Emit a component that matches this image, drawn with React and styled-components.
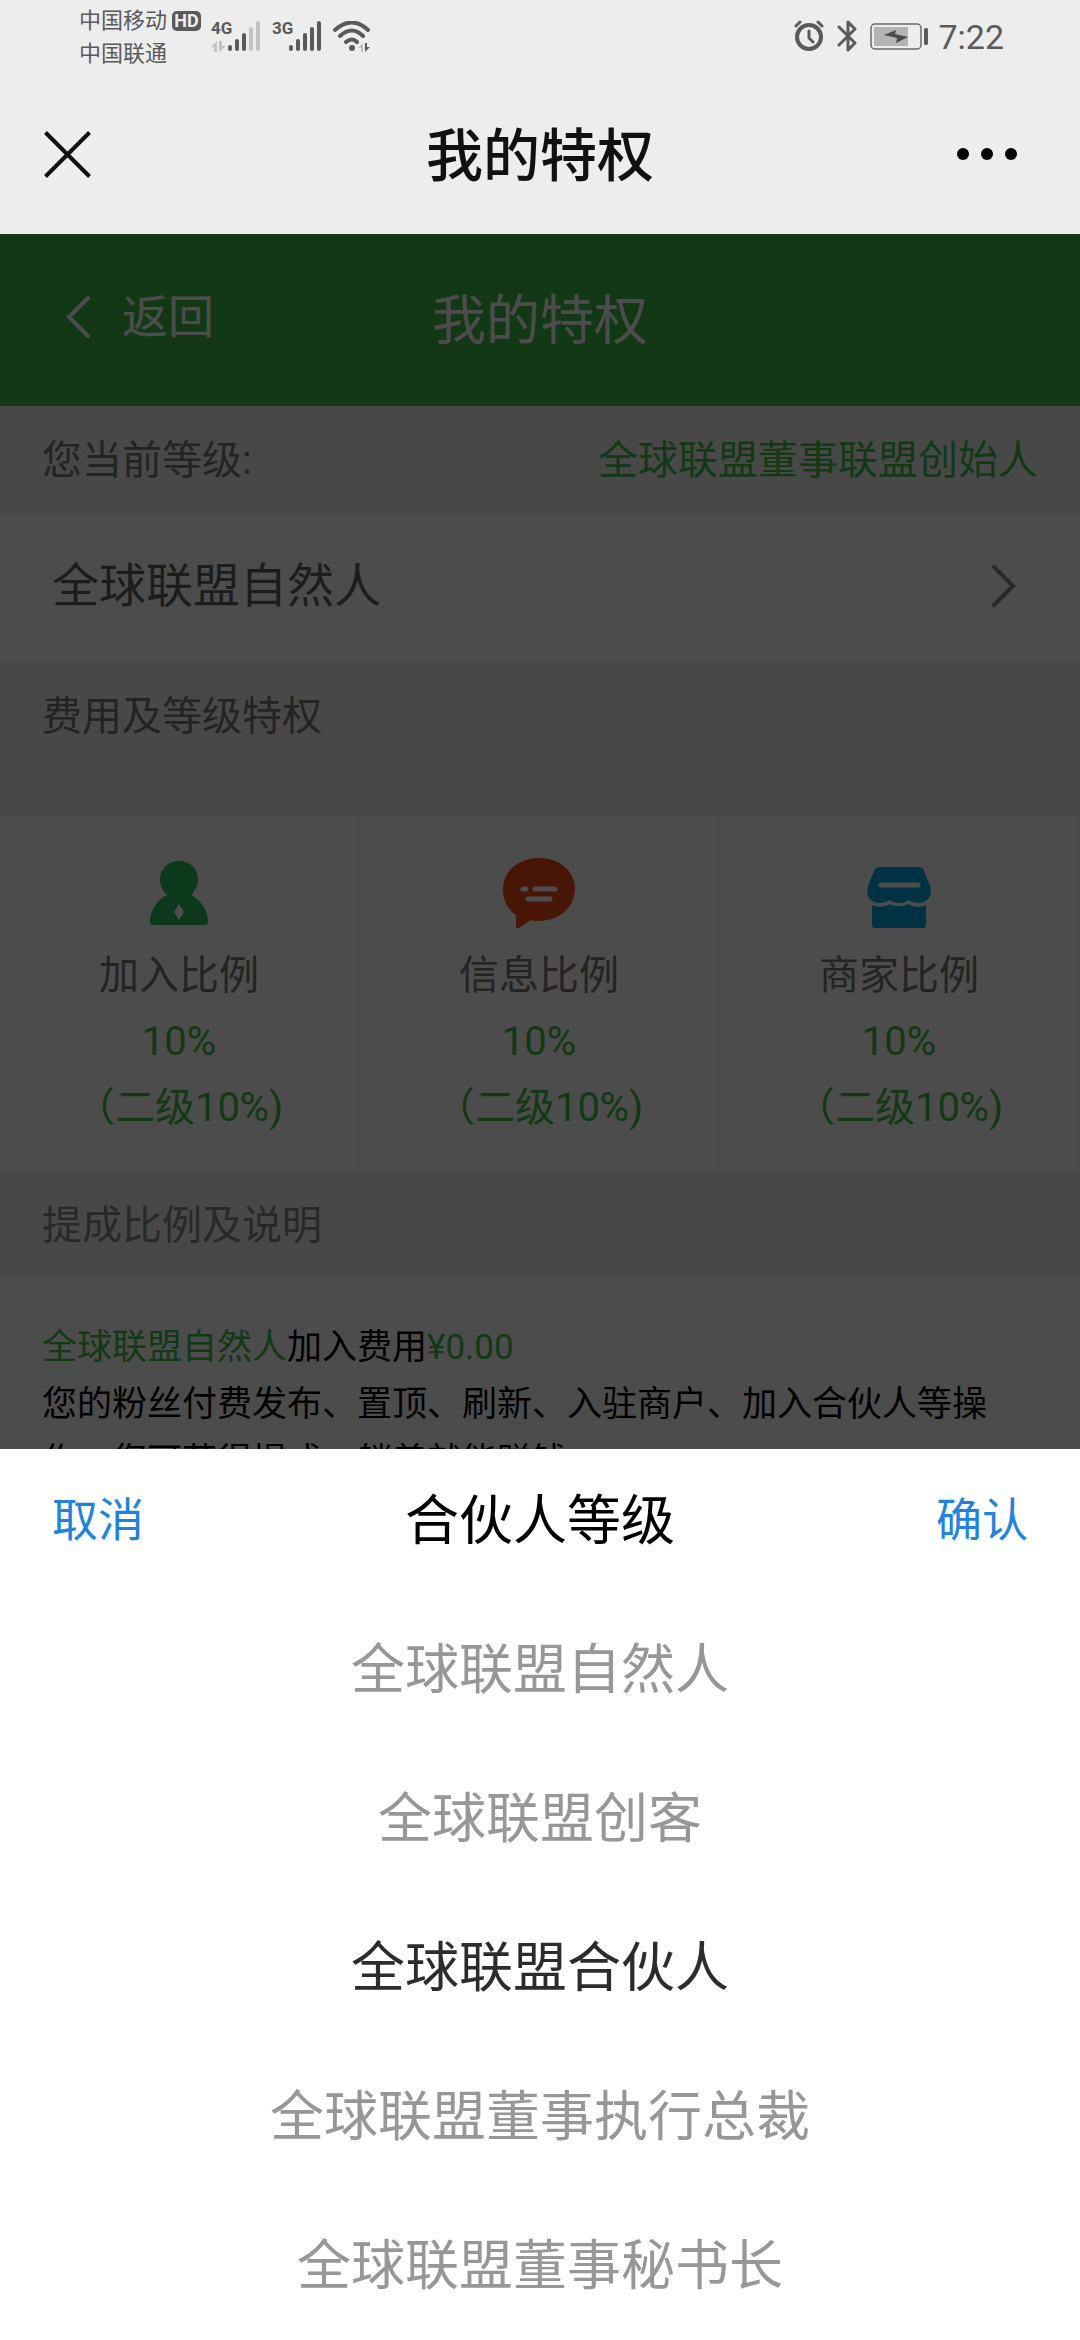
import React, { useState } from "react";
import styled, { createGlobalStyle } from "styled-components";

const GlobalStyle = createGlobalStyle`
  *, *::before, *::after { box-sizing: border-box; }
  html, body { margin: 0; padding: 0; }
  body {
    font-family: Roboto, "Noto Sans CJK SC", sans-serif;
    color: #000;
    background: #fff;
  }
  h1, h2, h3, p, ul { margin: 0; padding: 0; font-weight: 400; }
  ul { list-style: none; }
  button {
    margin: 0;
    padding: 0;
    border: 0;
    background: none;
    color: inherit;
    font: inherit;
    cursor: pointer;
  }
  svg { display: block; flex: none; }
`;

const green = "#3fbb4a";

const Screen = styled.div`
  display: flex;
  flex-direction: column;
  height: 100vh;
  overflow: hidden;
`;

const StatusBar = styled.header`
  display: flex;
  justify-content: space-between;
  height: 74px;
  padding: 0 76px 0 79px;
  background: #ededed;
  color: #5a5a5a;
`;

const StatusGroup = styled.div`
  display: flex;
  align-items: flex-start;
  gap: ${(p) => p.$gap || 0}px;
  padding-top: ${(p) => p.$top || 0}px;
`;

const Carriers = styled.div`
  display: flex;
  flex-direction: column;
  font-size: 22px;
  line-height: 33px;
`;

const CarrierLine = styled.span`
  display: flex;
  align-items: center;
  gap: 5px;
`;

const HdBadge = styled.span`
  display: grid;
  place-items: center;
  width: 29px;
  height: 20px;
  border-radius: 5px;
  background: #5a5a5a;
  color: #ededed;
  font-size: 18px;
  font-weight: 700;
  line-height: 20px;
`;

const Signal = styled.div`
  display: flex;
  align-items: flex-start;
`;

const SignalSide = styled.div`
  display: flex;
  flex-direction: column;
  gap: 6px;
  width: 17px;
  font-size: 17px;
  font-weight: 700;
  line-height: 14px;
`;

const Clock = styled.time`
  font-size: 34px;
  line-height: 34px;
`;

const NavBar = styled.div`
  display: grid;
  grid-template-columns: 1fr auto 1fr;
  align-items: center;
  height: 160px;
  padding: 0 44px;
  background: #ededed;
  color: #111;
`;

const NavTitle = styled.h1`
  padding-top: 6px;
  font-size: 57px;
  font-weight: 500;
  line-height: 80px;
`;

const NavButton = styled.button`
  justify-self: ${(p) => (p.$end ? "end" : "start")};
  padding-right: ${(p) => (p.$end ? 18 : 0)}px;
`;

const Stage = styled.main`
  position: relative;
  flex: 1;
  min-height: 0;
  overflow: hidden;
  background: #fff;
`;

const PageBar = styled.div`
  display: grid;
  grid-template-columns: 1fr auto 1fr;
  align-items: center;
  height: 172px;
  padding: 0 64px;
  background: ${green};
  color: #fff;
`;

const BackButton = styled.button`
  display: flex;
  align-items: center;
  gap: 30px;
  padding-bottom: 6px;
  font-size: 46px;
  line-height: 64px;
`;

const PageTitle = styled.h2`
  padding-top: 4px;
  font-size: 54px;
  line-height: 80px;
`;

const Strip = styled.div`
  display: flex;
  justify-content: space-between;
  height: ${(p) => p.$height}px;
  padding: 25px 42px 0;
  background: #f2f2f2;
  color: ${(p) => p.$color || "#777"};
  font-size: 40px;
  line-height: 60px;
`;

const Accent = styled.span`
  color: ${green};
`;

const LevelButton = styled.button`
  display: flex;
  align-items: center;
  justify-content: space-between;
  width: 100%;
  height: 148px;
  padding: 0 62px 4px 52px;
  background: #fff;
  color: #5f5f5f;
  font-size: 47px;
  line-height: 68px;
`;

const Cells = styled.div`
  display: grid;
  grid-template-columns: repeat(3, 1fr);
  background: #fff;
`;

const Cell = styled.section`
  display: flex;
  flex-direction: column;
  align-items: center;
  height: 356px;
  padding-top: 35px;
  border-right: 2px solid #f4f4f4;
  color: #777;
  font-size: 40px;
  line-height: 66px;
  white-space: nowrap;

  svg { margin-bottom: 15px; }
`;

const Notes = styled.div`
  padding: 42px 42px;
  background: #fff;
  font-size: 35px;
  line-height: 57px;
`;

const Mask = styled.div`
  position: absolute;
  inset: 0;
  background: rgba(0, 0, 0, 0.7);
`;

const Sheet = styled.section`
  position: absolute;
  left: 0;
  right: 0;
  bottom: 0;
  background: #fff;
`;

const SheetBar = styled.div`
  display: grid;
  grid-template-columns: 1fr auto 1fr;
  align-items: center;
  height: 146px;
  padding: 0 52px 4px;
`;

const SheetTitle = styled.h3`
  padding-top: 4px;
  font-size: 54px;
  line-height: 80px;
`;

const SheetAction = styled.button`
  justify-self: ${(p) => (p.$end ? "end" : "start")};
  color: #1f84dc;
  font-size: 46px;
  line-height: 68px;
`;

const Option = styled.button`
  display: block;
  width: 100%;
  height: 149px;
  padding-top: 2px;
  color: ${(p) => (p.$active ? "#2c2c2c" : "#979797")};
  font-size: 54px;
  line-height: 80px;
  text-align: center;
`;

const barTops = [24, 18, 12, 6, 0];

function Bars({ lit }) {
  return (
    <svg width="33" height="31" viewBox="0 0 33 31">
      {barTops.map((top, i) => (
        <rect key={top} x={i * 7} y={top} width="4" height={30 - top} rx="2"
          fill={i < lit ? "#5a5a5a" : "#c2c2c2"} />
      ))}
    </svg>
  );
}

function DataArrows() {
  return (
    <svg width="15" height="11" viewBox="0 0 15 11" fill="#c2c2c2">
      <path d="M0 6 6 0v11H3V6zM8 0h3v5h4l-7 6z" />
    </svg>
  );
}

function WifiIcon() {
  return (
    <svg width="38" height="31" viewBox="0 0 38 31" fill="none" stroke="#5a5a5a" strokeWidth="4" strokeLinecap="round">
      <path d="M2 9Q19-6 35 9M7 15Q19 4 30 15M13 21Q19 16 24 21" />
      <circle cx="19" cy="27" r="3" fill="#5a5a5a" stroke="none" />
      <path d="M25 27l5-5v9h-2v-4z" fill="#c2c2c2" stroke="none" />
      <path d="M32 22v9l5-5h-3v-4z" fill="#5a5a5a" stroke="none" />
    </svg>
  );
}

function AlarmIcon() {
  return (
    <svg width="30" height="32" viewBox="0 0 30 32" fill="none" stroke="#5a5a5a" strokeWidth="4" strokeLinecap="round">
      <circle cx="15" cy="17" r="12" />
      <path strokeWidth="3" d="M15 11v7l4 4" />
      <path strokeWidth="3" d="M2 6 6 2M28 6 24 2" />
    </svg>
  );
}

function BluetoothIcon() {
  return (
    <svg width="20" height="32" viewBox="0 0 20 32" fill="none" stroke="#5a5a5a" strokeWidth="3" strokeLinecap="round" strokeLinejoin="round">
      <path d="M2 7 18 23 11 30V2l7 7L2 25" />
    </svg>
  );
}

function BatteryIcon() {
  return (
    <svg width="58" height="32" viewBox="0 0 58 32">
      <rect x="1" y="4" width="50" height="25" rx="4" fill="none" stroke="#6a6a6a" strokeWidth="1.5" />
      <rect x="4" y="7" width="34" height="19" fill="#b4b4b4" />
      <path d="M14 15 26 10l-1 4 13 3-12 6 1-5z" fill="#4a4a4a" />
      <rect x="54" y="8" width="4" height="17" rx="1.5" fill="#5a5a5a" />
    </svg>
  );
}

function CloseIcon() {
  return (
    <svg width="47" height="47" viewBox="0 0 47 47" stroke="#111" strokeWidth="4">
      <path d="M1.5 1.5l44 44M45.5 1.5l-44 44" />
    </svg>
  );
}

function MoreIcon() {
  return (
    <svg width="62" height="14" viewBox="0 0 62 14">
      <circle cx="7" cy="7" r="6" />
      <circle cx="31" cy="7" r="6" />
      <circle cx="55" cy="7" r="6" />
    </svg>
  );
}

function Chevron({ left, color }) {
  return (
    <svg width="28" height="44" viewBox="0 0 28 44" fill="none" stroke={color} strokeWidth="4" strokeLinecap="round">
      <path d={left ? "M24 3 5 22l19 19" : "M4 3l19 19L4 41"} />
    </svg>
  );
}

function PersonIcon() {
  return (
    <svg width="78" height="78" viewBox="0 0 78 78">
      <path fill="#28bc5a" d="M39 11c11 0 19 8 19 18 0 7-3 12-7 16 10 5 17 15 17 27 0 2-1 3-3 3H13c-2 0-3-1-3-3 0-12 7-22 17-27-4-4-7-9-7-16 0-10 8-18 19-18z" />
      <path fill="#fff" d="M39 54l5 8-5 8-5-8z" />
    </svg>
  );
}

function MessageIcon() {
  return (
    <svg width="78" height="78" viewBox="0 0 78 78">
      <path fill="#f04a18" d="M39 8c20 0 36 13 36 31S59 71 39 71c-3 0-6 0-8-1l-12 8c-2 1-3 0-3-2V65C8 60 3 51 3 39 3 21 19 8 39 8z" />
      <path stroke="#fff" strokeWidth="5" strokeLinecap="round" d="M23 39h3M35 39h20M28 49h22" />
    </svg>
  );
}

function ShopIcon() {
  return (
    <svg width="78" height="78" viewBox="0 0 78 78">
      <path fill="#00a8e4" d="M20 17h38c3 0 5 1 6 4l6 15c3 9-2 17-12 17-4 0-7-2-10-3-3 4-14 4-18 0-3 1-6 3-10 3-10 0-15-8-12-17l6-15c1-3 3-4 6-4z" />
      <path fill="#00a8e4" d="M12 55c7 3 13 2 18-1 5 3 13 3 18 0 5 3 12 4 18 1v19c0 3-2 5-5 5H17c-3 0-5-2-5-5z" />
      <path stroke="#fff" strokeWidth="5" strokeLinecap="round" d="M21 35h37" />
    </svg>
  );
}

const ratios = [
  { name: "加入比例", Icon: PersonIcon },
  { name: "信息比例", Icon: MessageIcon },
  { name: "商家比例", Icon: ShopIcon },
];

const levels = [
  "全球联盟自然人",
  "全球联盟创客",
  "全球联盟合伙人",
  "全球联盟董事执行总裁",
  "全球联盟董事秘书长",
];

export default function App() {
  const [selected, setSelected] = useState(2);

  return (
    <Screen>
      <GlobalStyle />
      <StatusBar>
        <StatusGroup $gap={10} $top={4}>
          <Carriers>
            <CarrierLine>中国移动 <HdBadge>HD</HdBadge></CarrierLine>
            <CarrierLine>中国联通</CarrierLine>
          </Carriers>
          <StatusGroup $gap={11} $top={17}>
            <Signal>
              <SignalSide>4G<DataArrows /></SignalSide>
              <Bars lit={3} />
            </Signal>
            <Signal>
              <SignalSide>3G</SignalSide>
              <Bars lit={5} />
            </Signal>
            <WifiIcon />
          </StatusGroup>
        </StatusGroup>
        <StatusGroup $top={20} $gap={10}>
          <StatusGroup $gap={13}>
            <AlarmIcon />
            <BluetoothIcon />
            <BatteryIcon />
          </StatusGroup>
          <Clock>7:22</Clock>
        </StatusGroup>
      </StatusBar>

      <NavBar>
        <NavButton aria-label="关闭"><CloseIcon /></NavButton>
        <NavTitle>我的特权</NavTitle>
        <NavButton $end aria-label="更多"><MoreIcon /></NavButton>
      </NavBar>

      <Stage>
        <PageBar>
          <BackButton><Chevron left color="#fff" />返回</BackButton>
          <PageTitle>我的特权</PageTitle>
        </PageBar>
        <Strip $height={108}>
          <span>您当前等级:</span>
          <Accent>全球联盟董事联盟创始人</Accent>
        </Strip>
        <LevelButton>
          全球联盟自然人
          <Chevron color="#888" />
        </LevelButton>
        <Strip as="h3" $height={153}>费用及等级特权</Strip>
        <Cells>
          {ratios.map(({ name, Icon }) => (
            <Cell key={name}>
              <Icon />
              <span>{name}</span>
              <Accent>10%</Accent>
              <Accent>（二级10%)</Accent>
            </Cell>
          ))}
        </Cells>
        <Strip as="h3" $height={106} $color="#888">提成比例及说明</Strip>
        <Notes>
          <p><Accent>全球联盟自然人</Accent>加入费用<Accent>¥0.00</Accent></p>
          <p>您的粉丝付费发布、置顶、刷新、入驻商户、加入合伙人等操作，您可获得提成，躺着就能赚钱</p>
        </Notes>

        <Mask />
        <Sheet role="dialog" aria-label="合伙人等级">
          <SheetBar>
            <SheetAction>取消</SheetAction>
            <SheetTitle>合伙人等级</SheetTitle>
            <SheetAction $end>确认</SheetAction>
          </SheetBar>
          <ul>
            {levels.map((level, i) => (
              <li key={level}>
                <Option $active={i === selected} aria-pressed={i === selected} onClick={() => setSelected(i)}>
                  {level}
                </Option>
              </li>
            ))}
          </ul>
        </Sheet>
      </Stage>
    </Screen>
  );
}
